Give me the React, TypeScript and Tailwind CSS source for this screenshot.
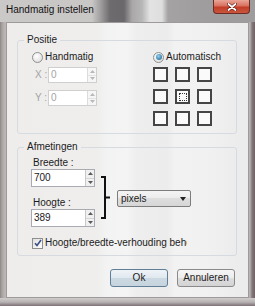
import React from "react";

function Spin({ disabled }: { disabled?: boolean }) {
  const c = disabled ? "#b8b8b8" : "#5a5a5a";
  return (
    <div className={`flex flex-col w-[9px] h-full border-l ${disabled ? "border-[#dcdcdc]" : "border-[#c8c8c8]"}`}>
      <div className={`flex-1 flex items-center justify-center border-b ${disabled ? "border-[#e2e2e2] bg-[#f6f6f6]" : "border-[#d4d4d4] bg-[#f0f0f0]"}`}>
        <svg width="5" height="3" viewBox="0 0 5 3"><path d="M0 3 L2.5 0 L5 3Z" fill={c} /></svg>
      </div>
      <div className={`flex-1 flex items-center justify-center ${disabled ? "bg-[#f6f6f6]" : "bg-[#f0f0f0]"}`}>
        <svg width="5" height="3" viewBox="0 0 5 3"><path d="M0 0 L2.5 3 L5 0Z" fill={c} /></svg>
      </div>
    </div>
  );
}

function Radio({ checked }: { checked?: boolean }) {
  return (
    <div className="w-[11px] h-[11px] rounded-full border border-[#8e8f8f] bg-[radial-gradient(circle_at_40%_35%,#ffffff,#d8d8d8)] flex items-center justify-center">
      {checked && <div className="w-[6px] h-[6px] rounded-full bg-[radial-gradient(circle_at_40%_35%,#8fd0f0,#1b5c8c)]" />}
    </div>
  );
}

function Cell({ focus }: { focus?: boolean }) {
  return (
    <div className="w-[15px] h-[15px] border-[2px] border-[#454545] bg-[#fafafa] flex items-center justify-center">
      {focus && <div className="w-[8px] h-[8px] border border-dotted border-[#333]" />}
    </div>
  );
}

export default function App() {
  return (
    <div className="w-[255px] h-[306px] flex flex-col bg-[linear-gradient(90deg,#8e8685_0px,#a8a2a1_2px,#bcb7b6_5px,#b8b3b2_250px,#85787b_252px,#6f6266_255px)] font-['Liberation_Sans',Arial,sans-serif] text-[10px] leading-[12px] text-[#1b1b1b] overflow-hidden">
      {/* Title bar */}
      <div className="h-[22px] flex items-start justify-between bg-[linear-gradient(90deg,#cbc9c8_0px,#c9c7c6_92px,#a3a1a1_100px,#6d6b6d_110px,#6a686a_124px,#a9a7a8_132px,#b8b7b7_142px,#e3e3e3_150px,#dedede_162px,#a4a2a3_168px,#9e9c9d_212px)]">
        <div className="pl-[6px] pt-[4px] text-[10px] leading-[12px] text-[#111]">Handmatig instellen</div>
        <div className="mr-[5px] w-[37px] h-[14px] rounded-b-[4px] border border-t-0 border-[#6e2b22] bg-[linear-gradient(#e9a597,#d9705e_45%,#c23d27_55%,#c9563f)] flex items-center justify-center">
          <svg width="10" height="8" viewBox="0 0 10 8">
            <path d="M1.5 1 L8.5 7 M8.5 1 L1.5 7" stroke="#5a1a12" strokeWidth="3" strokeLinecap="round" />
            <path d="M1.5 1 L8.5 7 M8.5 1 L1.5 7" stroke="#ffffff" strokeWidth="1.8" strokeLinecap="round" />
          </svg>
        </div>
      </div>

      {/* Client area */}
      <div className="mx-[6px] h-[276px] border border-[#9d9a99] bg-[linear-gradient(90deg,#eeedec_0px,#efeeed_90px,#f3f3f3_100px,#f4f4f4_120px,#eeeeee_130px,#ececec_160px,#f2f2f2_168px,#f1f1f1_200px,#ececec_230px)] flex flex-col">
        {/* Positie */}
        <fieldset className="ml-[10px] mt-[11px] w-[220px] border border-[#d5dbe0] rounded-[3px] pb-[7px]">
          <legend className="ml-[6px] px-[3px] text-[10px] leading-[12px]">Positie</legend>
          <div className="flex pt-[5px]">
            <div className="w-[135px] pl-[14px] flex flex-col">
              <div className="h-[12px] flex items-center">
                <Radio />
                <span className="ml-[2px]">Handmatig</span>
              </div>
              <div className="mt-[4px] flex items-center">
                <span className="w-[16px] pl-[3px] text-[#a3a3a3]">X :</span>
                <div className="w-[49px] h-[16px] flex border border-[#cfcfcf] bg-white">
                  <span className="flex-1 pl-[2px] leading-[14px] text-[#a3a3a3]">0</span>
                  <Spin disabled />
                </div>
              </div>
              <div className="mt-[7px] flex items-center">
                <span className="w-[16px] pl-[3px] text-[#a3a3a3]">Y :</span>
                <div className="w-[49px] h-[16px] flex border border-[#cfcfcf] bg-white">
                  <span className="flex-1 pl-[2px] leading-[14px] text-[#a3a3a3]">0</span>
                  <Spin disabled />
                </div>
              </div>
            </div>
            <div className="flex flex-col">
              <div className="h-[12px] flex items-center">
                <Radio checked />
                <span className="ml-[2px]">Automatisch</span>
              </div>
              <div className="mt-[4px] grid grid-cols-[15px_15px_15px] gap-[7px]">
                <Cell />
                <Cell />
                <Cell />
                <Cell />
                <Cell focus />
                <Cell />
                <Cell />
                <Cell />
                <Cell />
              </div>
            </div>
          </div>
        </fieldset>

        {/* Afmetingen */}
        <fieldset className="ml-[10px] mt-[7px] w-[220px] border border-[#d5dbe0] rounded-[3px] pb-[6px]">
          <legend className="ml-[6px] px-[3px] text-[10px] leading-[12px]">Afmetingen</legend>
          <div className="flex items-start pl-[13px]">
            <div className="flex flex-col pt-[4px]">
              <span className="pl-[2px]">Breedte :</span>
              <div className="w-[64px] h-[18px] flex border border-[#a9abb2] bg-white">
                <span className="flex-1 pl-[2px] leading-[16px]">700</span>
                <Spin />
              </div>
              <span className="mt-[10px] pl-[2px]">Hoogte :</span>
              <div className="w-[64px] h-[18px] flex border border-[#a9abb2] bg-white">
                <span className="flex-1 pl-[2px] leading-[16px]">389</span>
                <Spin />
              </div>
            </div>
            <svg className="ml-[6px] mt-[23px]" width="10" height="43" viewBox="0 0 10 43">
              <path d="M0 1 H4 V42 H0 M4 21.5 H9" stroke="#111" strokeWidth="2" fill="none" />
            </svg>
            <div className="ml-[6px] mt-[37px] w-[74px] h-[17px] flex items-center justify-between rounded-[2px] border border-[#7d7d7d] bg-[linear-gradient(#f4f4f4,#ececec_50%,#dedede_50%,#d6d6d6)] pl-[3px] pr-[4px]">
              <span>pixels</span>
              <svg width="6" height="4" viewBox="0 0 6 4"><path d="M0 0 H6 L3 4Z" fill="#222" /></svg>
            </div>
          </div>
          <div className="mt-[10px] pl-[14px] flex items-center">
            <div className="w-[11px] h-[11px] border border-[#8e8f8f] bg-[linear-gradient(135deg,#e0e0e0,#ffffff)] flex items-center justify-center">
              <svg width="8" height="8" viewBox="0 0 8 8">
                <path d="M1 4.2 L3 6.4 L7 1" stroke="#3c4f86" strokeWidth="1.6" fill="none" />
              </svg>
            </div>
            <span className="ml-[2px] w-[142px] overflow-hidden whitespace-nowrap">Hoogte/breedte-verhouding behouden</span>
          </div>
        </fieldset>

        {/* Buttons */}
        <div className="mt-[13px] flex justify-end gap-[9px] pr-[13px]">
          <button className="w-[58px] h-[18px] rounded-[3px] border border-[#5f7f98] bg-[linear-gradient(#eef3f7,#dfe8ee_50%,#ccd9e2_50%,#c6d4de)] text-[10px] leading-[12px] text-[#1b1b1b]">Ok</button>
          <button className="w-[58px] h-[18px] rounded-[3px] border border-[#8a8a8a] bg-[linear-gradient(#f5f5f5,#ececec_50%,#dedede_50%,#d3d3d3)] text-[10px] leading-[12px] text-[#1b1b1b]">Annuleren</button>
        </div>
      </div>

      {/* Bottom frame */}
      <div className="flex-1 bg-[linear-gradient(#cfcccb,#b9b4b4_50%,#7c7075)]" />
    </div>
  );
}
